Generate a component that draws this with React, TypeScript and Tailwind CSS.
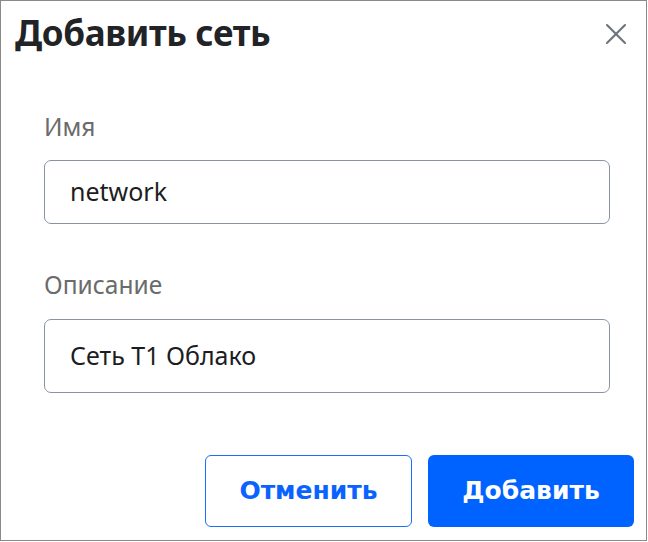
import { X } from 'lucide-react';

export default function App() {
  return (
    <div className="w-[648px] h-[542px] bg-white">
      <div className="w-[647px] h-[541px] border border-[#8a8a8a] flex flex-col" style={{ fontFamily: '"Noto Sans", sans-serif' }}>
        {/* header */}
        <div className="flex items-start justify-between pl-[14px] pr-[12px] pt-[6px]">
          <h1 className="text-[35px] leading-[52px] font-bold text-[#222327] tracking-[-0.35px]">Добавить сеть</h1>
          <button className="mt-[9px] text-[#6e737c]">
            <X size={36} strokeWidth={1.4} />
          </button>
        </div>

        {/* form */}
        <div className="flex flex-col pl-[43px] pr-[36px] pt-[52px]">
          <label className="text-[24.5px] leading-[32px] text-[#6b6b6b]">Имя</label>
          <div className="mt-[17px] h-[64px] rounded-[7px] border border-[#8b93a3] flex items-center px-[25px] text-[25px] text-[#1d1d1f]">
            network
          </div>

          <label className="mt-[45px] text-[24.5px] leading-[32px] text-[#6b6b6b]">Описание</label>
          <div className="mt-[18px] h-[74px] rounded-[7px] border border-[#8b93a3] flex items-center px-[25px] text-[25px] text-[#1d1d1f]">
            Сеть Т1 Облако
          </div>
        </div>

        {/* footer */}
        <div className="mt-auto flex justify-end gap-[16px] pr-[12px] pb-[13px]" style={{ fontFamily: '"DejaVu Sans", sans-serif' }}>
          <button className="w-[207px] h-[72px] rounded-[6px] border border-[#1a6dff] bg-white text-[#0a63ff] text-[25px] font-bold">
            Отменить
          </button>
          <button className="w-[206px] h-[72px] rounded-[6px] bg-[#0062ff] text-white text-[25px] font-bold">
            Добавить
          </button>
        </div>
      </div>
    </div>
  );
}
